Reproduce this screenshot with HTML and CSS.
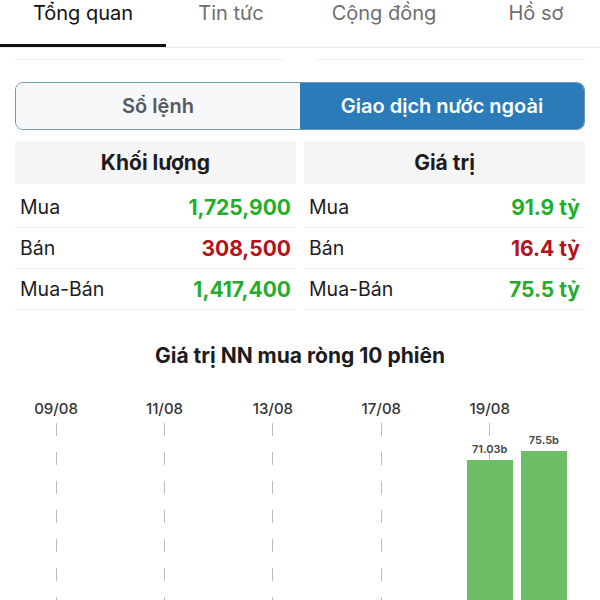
FILE: index.html
```html
<!DOCTYPE html>
<html lang="vi">
<head>
    <meta charset="UTF-8">
    <meta name="viewport" content="width=device-width, initial-scale=1.0">
    <title>Tổng quan</title>
    <link rel="stylesheet" href="styles.css">
</head>
<body>
    <div class="tabs">
        <div class="tab active">Tổng quan</div>
        <div class="tab">Tin tức</div>
        <div class="tab">Cộng đồng</div>
        <div class="tab">Hồ sơ</div>
    </div>

    <div class="peek">
        <div class="peek-card"></div>
        <div class="peek-card"></div>
    </div>

    <div class="segment">
        <div class="seg-item">Sổ lệnh</div>
        <div class="seg-item selected">Giao dịch nước ngoài</div>
    </div>

    <div class="tables">
        <div class="table">
            <div class="table-head">Khối lượng</div>
            <div class="row"><span>Mua</span><span class="up">1,725,900</span></div>
            <div class="row"><span>Bán</span><span class="down">308,500</span></div>
            <div class="row"><span>Mua-Bán</span><span class="up">1,417,400</span></div>
        </div>
        <div class="table">
            <div class="table-head">Giá trị</div>
            <div class="row"><span>Mua</span><span class="up">91.9 tỷ</span></div>
            <div class="row"><span>Bán</span><span class="down">16.4 tỷ</span></div>
            <div class="row"><span>Mua-Bán</span><span class="up">75.5 tỷ</span></div>
        </div>
    </div>

    <div class="chart-title">Giá trị NN mua ròng 10 phiên</div>

    <div class="chart">
        <div class="col"><div class="date">09/08</div><div class="plot dashed"></div></div>
        <div class="col"><div class="date"></div><div class="plot"></div></div>
        <div class="col"><div class="date">11/08</div><div class="plot dashed"></div></div>
        <div class="col"><div class="date"></div><div class="plot"></div></div>
        <div class="col"><div class="date">13/08</div><div class="plot dashed"></div></div>
        <div class="col"><div class="date"></div><div class="plot"></div></div>
        <div class="col"><div class="date">17/08</div><div class="plot dashed"></div></div>
        <div class="col"><div class="date"></div><div class="plot"></div></div>
        <div class="col">
            <div class="date">19/08</div>
            <div class="plot dashed">
                <div class="bar-label">71.03b</div>
                <div class="bar" style="height: 163px"></div>
            </div>
        </div>
        <div class="col">
            <div class="date"></div>
            <div class="plot">
                <div class="bar-label">75.5b</div>
                <div class="bar" style="height: 172px"></div>
            </div>
        </div>
    </div>
</body>
</html>
```

FILE: styles.css
```css
body {
    margin: 0;
    background-color: white;
    font-family: Inter, 'Noto Sans', sans-serif;
    color: #1c1c1e;
    overflow: hidden;
}

.tabs {
    display: grid;
    grid-template-columns: 166px 130px 176px 1fr;
    height: 47px;
    border-bottom: 1px solid #ececec;
}

.tab {
    text-align: center;
    font-size: 20px;
    color: #6e6e6e;
    line-height: 26px;
}

.tab.active {
    color: #111;
    border-bottom: 3px solid #111;
    box-sizing: border-box;
    height: 47px;
}

.peek {
    display: flex;
    justify-content: space-between;
    padding: 0 15px;
    height: 12px;
}

.peek-card {
    width: 270px;
    border-bottom: 1px solid #ededed;
}

.segment {
    display: flex;
    margin: 22px 15px 0;
    height: 48px;
    border-radius: 8px;
    overflow: hidden;
    border: 1.5px solid #6d9bab;
    box-sizing: border-box;
}

.seg-item {
    flex: 1;
    display: flex;
    align-items: center;
    justify-content: center;
    font-size: 20px;
    font-weight: 600;
    color: #555a60;
    background-color: #f6f8fa;
}

.seg-item.selected {
    background-color: #2b7bb9;
    color: white;
}

.tables {
    display: flex;
    gap: 8px;
    margin: 11px 15px 0;
}

.table {
    flex: 1;
}

.table-head {
    height: 43px;
    line-height: 43px;
    background-color: #f5f5f5;
    text-align: center;
    font-size: 21px;
    font-weight: 700;
    margin-bottom: 3px;
}

.row {
    display: flex;
    justify-content: space-between;
    align-items: center;
    height: 40px;
    padding: 0 5px;
    border-bottom: 1px solid #efefef;
    font-size: 19.5px;
}

.up {
    color: #22ad2b;
    font-weight: 700;
    font-size: 21px;
}

.down {
    color: #b3131b;
    font-weight: 700;
    font-size: 21px;
}

.chart-title {
    text-align: center;
    font-size: 21px;
    font-weight: 700;
    margin-top: 33px;
}

.chart {
    display: grid;
    grid-template-columns: repeat(10, 1fr);
    margin: 31px 29px 0;
}

.col {
    display: flex;
    flex-direction: column;
}

.date {
    height: 20px;
    text-align: center;
    font-size: 15px;
    font-weight: 500;
    color: #333;
    margin-bottom: 4px;
}

.plot {
    height: 200px;
    display: flex;
    flex-direction: column;
    justify-content: flex-end;
    align-items: center;
}

.dashed {
    background-image: linear-gradient(to bottom, #bdbdbd 13px, transparent 13px);
    background-size: 1px 29px;
    background-position: center top;
    background-repeat: repeat-y;
}

.bar-label {
    font-size: 11px;
    font-weight: 600;
    color: #444;
    margin-bottom: 4px;
}

.bar {
    width: 46px;
    background-color: #6cbd65;
}
```
